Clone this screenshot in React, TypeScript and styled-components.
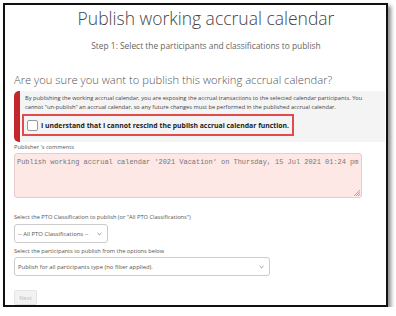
import React from "react";
import styled, { createGlobalStyle } from "styled-components";

const Global = createGlobalStyle`
  html, body { margin: 0; padding: 0; background: #fff; }
  body { font-family: "Open Sans", "Noto Sans", sans-serif; color: #333; }
  * { box-sizing: border-box; }
`;

const Frame = styled.div`
  margin: 3px 0 0 3px;
  width: 385px;
  height: 304px;
  border: 2px solid #111;
  box-shadow: 3px 3px 4px rgba(0, 0, 0, 0.45);
  overflow: hidden;
  padding: 0 1px 0 9px;
  display: flex;
  flex-direction: column;
`;

const Header = styled.header`
  padding-left: 13px;
  text-align: center;
`;

const Title = styled.h1`
  margin: 1px 0 0;
  font-weight: 300;
  font-size: 17.5px;
  line-height: 24px;
  color: #444;
  white-space: nowrap;
`;

const Subtitle = styled.div`
  margin-top: 10px;
  font-size: 8.4px;
  line-height: 12px;
  color: #666;
  white-space: nowrap;
`;

const Question = styled.div`
  margin-top: 21px;
  font-size: 11.2px;
  font-weight: 300;
  line-height: 14px;
  color: #555;
  white-space: nowrap;
`;

const Alert = styled.div`
  margin-top: 4px;
  background: #f4f4f4;
  border-left: 6px solid #c3272b;
  border-radius: 5px 0 0 5px;
  padding: 3px 4px 6px 5px;
`;

const AlertText = styled.p`
  margin: 0;
  font-size: 5.7px;
  line-height: 8.5px;
  color: #444;
`;

const ConfirmBox = styled.label`
  margin: 3px 0 0 -3px;
  height: 22px;
  width: 272px;
  display: flex;
  align-items: center;
  gap: 3px;
  border: 2px solid #e24b4b;
  padding: 0 3px;
  font-size: 6.85px;
  font-weight: 700;
  color: #222;
  white-space: nowrap;
`;

const Check = styled.span`
  width: 11px;
  height: 11px;
  border: 1px solid #999;
  border-radius: 2px;
  background: #fff;
  flex: none;
`;

const Label = styled.div<{ $mt: number }>`
  font-size: 5.7px;
  line-height: 8px;
  color: #555;
  margin-top: ${(p) => p.$mt}px;
  white-space: nowrap;
`;

const Comments = styled.div`
  margin-top: 2px;
  width: 348px;
  height: 45px;
  flex: none;
  background: #fde8e6;
  border: 1px solid #e6cccc;
  border-radius: 3px;
  padding: 4px 2px;
  font-family: "Liberation Mono", "DejaVu Sans Mono", monospace;
  font-size: 6.95px;
  line-height: 9px;
  color: #777;
  position: relative;
  white-space: nowrap;
`;

const Grip = styled.svg`
  position: absolute;
  right: 1px;
  bottom: 1px;
`;

const Select = styled.div<{ $w: number; $mt: number }>`
  margin-top: ${(p) => p.$mt}px;
  width: ${(p) => p.$w}px;
  height: 19px;
  flex: none;
  border: 1px solid #ccc;
  border-radius: 3px;
  display: flex;
  align-items: center;
  justify-content: space-between;
  padding: 0 5px 0 3px;
  font-size: 5.9px;
  color: #555;
  background: #fff;
  white-space: nowrap;
`;

const Chevron = styled.svg`
  flex: none;
`;

const NextButton = styled.button`
  margin-top: 14px;
  align-self: flex-start;
  width: 23px;
  height: 16px;
  padding: 0;
  border: 1px solid #e4e4e4;
  border-radius: 2px;
  background: #f2f2f2;
  color: #bbb;
  font-family: inherit;
  font-size: 5.8px;
`;

const Chev = () => (
  <Chevron width="5" height="4" viewBox="0 0 5 4">
    <path d="M0.6 1 L2.5 2.8 L4.4 1" fill="none" stroke="#777" strokeWidth="0.8" />
  </Chevron>
);

export default function App() {
  return (
    <>
      <Global />
      <Frame>
        <Header>
          <Title>Publish working accrual calendar</Title>
          <Subtitle>Step 1: Select the participants and classifications to publish</Subtitle>
        </Header>
        <Question>Are you sure you want to publish this working accrual calendar?</Question>
        <Alert>
          <AlertText>
            By publishing the working accrual calendar, you are exposing the accrual transactions to the selected calendar participants. You
            cannot "un-publish" an accrual calendar, so any future changes must be performed in the published accrual calendar.
          </AlertText>
          <ConfirmBox>
            <Check />
            I understand that I cannot rescind the publish accrual calendar function.
          </ConfirmBox>
        </Alert>
        <Label $mt={1}>Publisher 's comments</Label>
        <Comments>
          Publish working accrual calendar '2021 Vacation' on Thursday, 15 Jul 2021 01:24 pm
          <Grip width="6" height="6" viewBox="0 0 6 6">
            <path d="M6 0 L0 6 M6 2 L2 6 M6 4 L4 6" stroke="#999" strokeWidth="0.8" />
          </Grip>
        </Comments>
        <Label $mt={15}>Select the PTO Classification to publish (or "All PTO Classifications")</Label>
        <Select $w={94} $mt={3}>
          -- All PTO Classifications --
          <Chev />
        </Select>
        <Label $mt={4}>Select the participants to publish from the options below</Label>
        <Select $w={256} $mt={2}>
          Publish for all participants type (no filter applied).
          <Chev />
        </Select>
        <NextButton disabled>Next</NextButton>
      </Frame>
    </>
  );
}
